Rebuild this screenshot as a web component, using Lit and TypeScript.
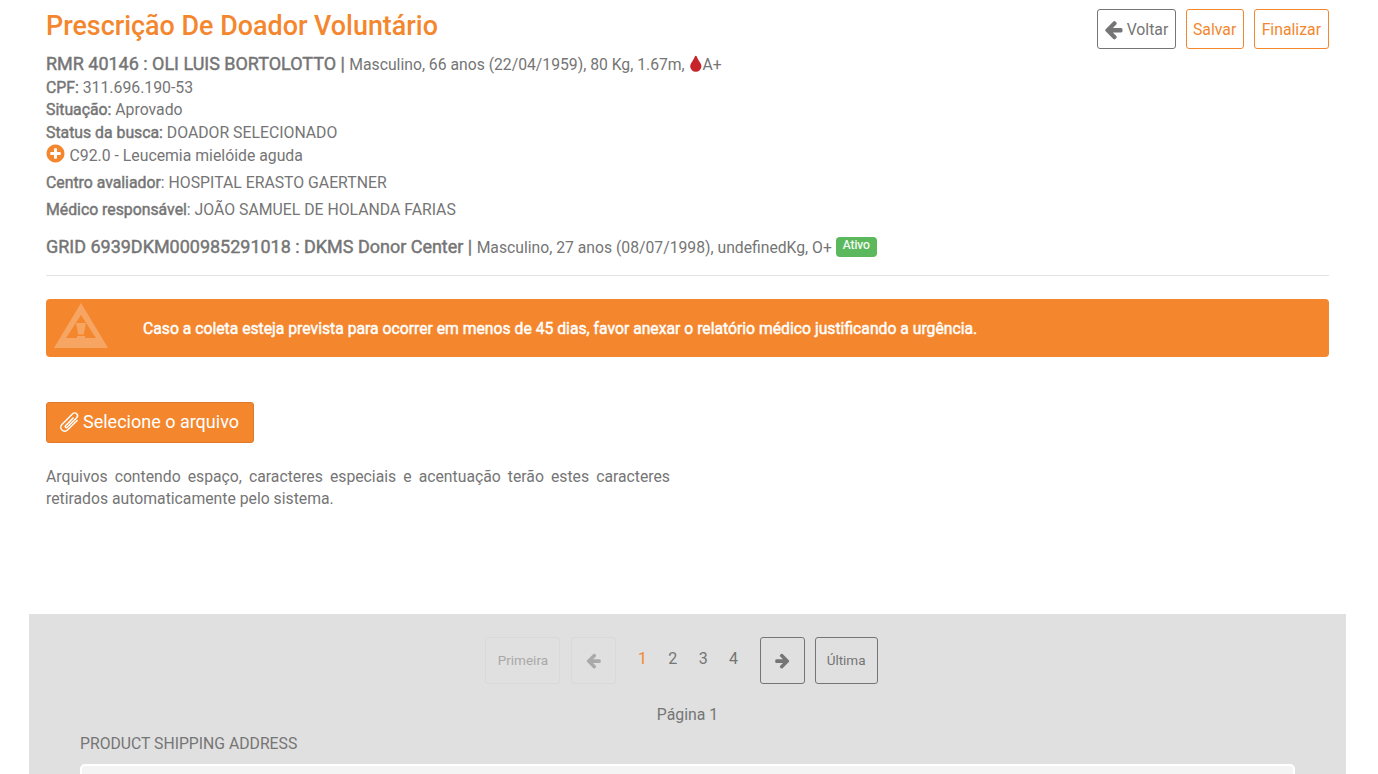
import { LitElement, html, css, svg } from "lit";
import { customElement } from "lit/decorators.js";

const P = {
  left: "M1664 896v128q0 53-32.500 90.500t-84.500 37.500h-704l293 294q38 36 38 90t-38 90l-75 76q-37 37-90 37-52 0-91-37l-651-652q-37-37-37-90 0-52 37-91l651-650q38-38 91-38 52 0 90 38l75 74q38 38 38 91t-38 91l-293 293h704q52 0 84.500 37.500t32.500 90.500z",
  right: "M1600 960q0 54-37 91l-651 651q-39 37-91 37-51 0-90-37l-75-75q-38-38-38-91t38-91l293-293h-704q-52 0-84.500-37.500t-32.500-90.500v-128q0-53 32.500-90.500t84.500-37.500h704l-293-294q-38-36-38-90t38-90l75-75q38-38 90-38 53 0 91 38l651 651q37 35 37 90z",
  plus: "M1344 960v-128q0-26-19-45t-45-19h-256v-256q0-26-19-45t-45-19h-128q-26 0-45 19t-19 45v256h-256q-26 0-45 19t-19 45v128q0 26 19 45t45 19h256v256q0 26 19 45t45 19h128q26 0 45-19t19-45v-256h256q26 0 45-19t19-45zm320-64q0 209-103 385.500t-279.500 279.500-385.500 103-385.500-103-279.500-279.500-103-385.500 103-385.500 279.500-279.500 385.500-103 385.500 103 279.500 279.500 103 385.500z",
  tint: "M1408 1024q0 212-150 362t-362 150-362-150-150-362q0-145 81-275 6-9 62.500-90.500t101-151 99.500-178 83-201.500q9-30 34-47t51-17 51.500 17 33.500 47q28 93 83 201.500t99.500 178 101 151 62.500 90.500q81 127 81 275z",
};
const icon = (d: string, cls: string) =>
  html`<svg class=${cls} viewBox="0 0 1792 1792" fill="currentColor">${svg`<path d=${d}></path>`}</svg>`;

@customElement("app-root")
export class AppRoot extends LitElement {
  static styles = css`
    :host { display: block; height: 774px; overflow: hidden; font-family: Roboto, sans-serif; font-size: 15.8px; color: #757575; background: #fff; }
    b, .big, .alert-text { font-weight: 400; -webkit-text-stroke: .45px currentColor; }
    .main { padding: 0 49px 0 46px; }
    .top { display: flex; justify-content: space-between; align-items: flex-start; }
    h1 { margin: 0; padding-top: 10px; font-size: 26.9px; line-height: 32px; font-weight: 500; color: #f4872e; }
    .btns { display: flex; gap: 10px; padding-top: 9px; }
    .btn { box-sizing: border-box; height: 40px; display: flex; align-items: center; justify-content: center; padding: 0 7px; border: 1px solid #f4872e; border-radius: 3px; color: #f4872e; font-size: 15.8px; }
    .btn.back { width: 79px; padding: 0 0 0 5px; justify-content: flex-start; border-color: #757575; color: #757575; gap: 3px; }
    .btn.save { width: 58px; padding: 0; }
    .i-back { width: 21px; height: 21px; }
    .info { line-height: 23px; margin-top: 10px; }
    .big { font-size: 17.98px; }
    .sub { font-size: 15.72px; }
    .rmr { line-height: 24px; }
    .cpf { line-height: 21px; }
    .tint { width: 19.600px; height: 19.600px; color: #c6232a; vertical-align: -5px; margin: 0 -3.500px 0 -2.200px; }
    .cid { display: flex; align-items: center; gap: 4px; }
    .plus { width: 21px; height: 21px; color: #f4872e; margin: -5px 0 0 -1.500px; }
    .row { margin-top: 4px; }
    .grid { margin-top: 14px; line-height: 23px; }
    .badge { display: inline-block; background: #5cb85c; color: #fff; font-size: 12px; line-height: 17px; height: 20px; padding: 0 7px; border-radius: 4px; vertical-align: 4px; -webkit-text-stroke: .2px #fff; }
    hr { border: 0; border-top: 1px solid #e4e4e4; margin: 16px 0 23px; }
    .alert { position: relative; display: flex; align-items: center; height: 58px; background: #f4872e; border-radius: 4px; color: #fff; font-size: 15.73px; padding-left: 97px; }
    .alert svg { position: absolute; left: 8px; top: 4px; width: 54px; height: 46px; color: #fff; opacity: .25; }
    .upload { box-sizing: border-box; display: flex; align-items: center; width: 208px; height: 41px; margin-top: 45px; padding: 0 0 2px 9px; background: #f4872e; border: 1px solid #e07a2a; border-radius: 3px; color: #fff; font-size: 18px; }
    .i-clip { width: 27px; height: 27px; transform: rotate(45deg); margin: 2px 0 0 0; flex: none; }
    .note { width: 624px; margin: 23px 0 0; line-height: 22px; text-align: justify; font-size: 15.75px; }
    .panel { margin: 104px 32px 0 29px; height: 160px; background: #e0e0e0; padding-top: 23px; box-sizing: border-box; overflow: hidden; }
    .pager { display: flex; justify-content: center; align-items: flex-start; margin-right: 12px; height: 47px; }
    .pg { box-sizing: border-box; height: 47px; display: flex; align-items: center; justify-content: center; border: 1px solid #757575; border-radius: 3px; font-size: 13.500px; padding-bottom: 1px; }
    .pg.off { border-color: #d9d9d9; color: #a9a9a9; }
    .pg.w1 { width: 75px; }
    .pg.w2 { width: 45px; }
    .pg.w3 { width: 63px; }
    .i-pg { width: 17px; height: 17px; }
    .nums { display: flex; padding: 0 11px; }
    .n { width: 30.300px; text-align: center; font-size: 16px; line-height: 44px; }
    .n.cur { color: #f4872e; }
    .gap { width: 10px; }
    .gap2 { width: 11px; }
    .page { text-align: center; margin-top: 21px; line-height: 20px; }
    .ship { margin: 9px 51px 0; line-height: 20px; font-size: 15.75px; }
    .card { margin: 10px 51px 0; height: 40px; background: #f4f4f4; border: 2px solid #fff; border-radius: 5px; }
  `;

  render() {
    return html`
      <div class="main">
        <div class="top">
          <div>
            <h1>Prescrição De Doador Voluntário</h1>
            <div class="info">
              <div class="rmr"><span class="big">RMR 40146 : OLI LUIS BORTOLOTTO | </span><span class="sub">Masculino, 66 anos (22/04/1959), 80 Kg, 1.67m, ${icon(P.tint, "tint")}A+</span></div>
              <div class="cpf"><b>CPF:</b> 311.696.190-53</div>
              <div><b>Situação:</b> Aprovado</div>
              <div><b>Status da busca:</b> DOADOR SELECIONADO</div>
              <div class="cid">${icon(P.plus, "plus")}<span>C92.0 - Leucemia mielóide aguda</span></div>
              <div class="row"><b>Centro avaliador</b>: HOSPITAL ERASTO GAERTNER</div>
              <div class="row"><b>Médico responsável</b>: JOÃO SAMUEL DE HOLANDA FARIAS</div>
              <div class="grid"><span class="big">GRID 6939DKM000985291018 : DKMS Donor Center | </span><span class="sub">Masculino, 27 anos (08/07/1998), undefinedKg, O+</span> <span class="badge">Ativo</span></div>
            </div>
          </div>
          <div class="btns">
            <div class="btn back">${icon(P.left, "i-back")}Voltar</div>
            <div class="btn save">Salvar</div>
            <div class="btn">Finalizar</div>
          </div>
        </div>
        <hr />
        <div class="alert">
          <svg viewBox="0 0 54 46" fill="currentColor">
            <path fill-rule="evenodd" d="M27 0 L54 45 H0 Z M27 12 L12 35 H42 Z"></path>
            <path d="M22 20 H32 L29.700 31.500 H24.300 Z M23 33 H31 V35.500 H23 Z"></path>
          </svg>
          <span class="alert-text">Caso a coleta esteja prevista para ocorrer em menos de 45 dias, favor anexar o relatório médico justificando a urgência.</span>
        </div>
        <div class="upload">
          <svg class="i-clip" viewBox="0 0 24 24" fill="none" stroke="currentColor" stroke-width="1.300" stroke-linecap="round"><path d="M15.500 6v12a3.500 3.500 0 0 1-7 0V4.500a2.500 2.500 0 0 1 5 0V16.500a1 1 0 0 1-2 0V7"></path></svg>
          <span>Selecione o arquivo</span>
        </div>
        <p class="note">Arquivos contendo espaço, caracteres especiais e acentuação terão estes caracteres retirados automaticamente pelo sistema.</p>
      </div>
      <div class="panel">
        <div class="pager">
          <div class="pg off w1">Primeira</div>
          <div class="gap2"></div>
          <div class="pg off w2">${icon(P.left, "i-pg")}</div>
          <div class="nums"><span class="n cur">1</span><span class="n">2</span><span class="n">3</span><span class="n">4</span></div>
          <div class="pg w2">${icon(P.right, "i-pg")}</div>
          <div class="gap"></div>
          <div class="pg w3">Última</div>
        </div>
        <div class="page">Página 1</div>
        <div class="ship">PRODUCT SHIPPING ADDRESS</div>
        <div class="card"></div>
      </div>
    `;
  }
}
